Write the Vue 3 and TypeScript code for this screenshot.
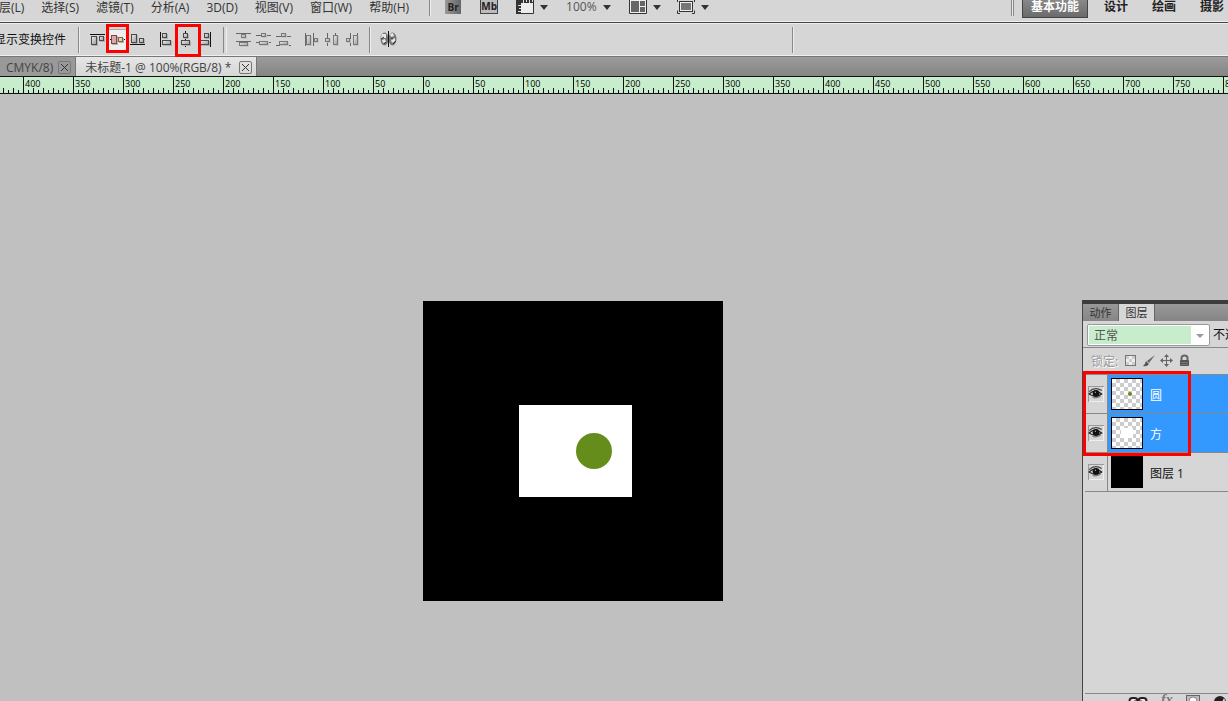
<script setup lang="ts">
import { ref } from 'vue'

const menus: string[] = ['层(L)', '选择(S)', '滤镜(T)', '分析(A)', '3D(D)', '视图(V)', '窗口(W)', '帮助(H)']
const workspaces: string[] = ['基本功能', '设计', '绘画', '摄影']
const rulerMarks: number[] = Array.from({ length: 26 }, (_, i) => Math.abs(-450 + i * 50))

interface Icon { label: string; lines: string; boxes: number[][]; dim?: boolean; pressed?: boolean }

const groups: { name: string; icons: Icon[] }[] = [
  {
    name: 'vertical',
    icons: [
      { label: '顶对齐', lines: 'M2 4.5H17', boxes: [[3, 6, 6, 9], [11, 6, 5, 5]] },
      { label: '垂直居中对齐', lines: 'M2 9.5H17', boxes: [[3, 5, 6, 9], [10, 7, 5, 5]], pressed: true },
      { label: '底对齐', lines: 'M2 14.5H17', boxes: [[3, 4, 6, 9], [11, 8, 5, 5]] },
    ],
  },
  {
    name: 'horizontal',
    icons: [
      { label: '左对齐', lines: 'M4.5 2V17', boxes: [[6, 3, 5, 5], [6, 10, 9, 5]] },
      { label: '水平居中对齐', lines: 'M9.5 1V17', boxes: [[7, 3, 5, 5], [5, 10, 9, 5]] },
      { label: '右对齐', lines: 'M14.5 2V17', boxes: [[8, 3, 5, 5], [4, 10, 9, 5]] },
    ],
  },
  {
    name: 'spread-v',
    icons: [
      { label: '按顶分布', lines: 'M2 3.5H17M2 11.5H17', boxes: [[7, 4, 5, 4], [5, 12, 9, 4]], dim: true },
      { label: '垂直居中分布', lines: 'M2 5.5H17M2 12.5H17', boxes: [[7, 3, 5, 4], [5, 11, 9, 4]], dim: true },
      { label: '按底分布', lines: 'M2 6.5H17M2 15.5H17', boxes: [[7, 3, 5, 4], [5, 11, 9, 4]], dim: true },
    ],
  },
  {
    name: 'spread-h',
    icons: [
      { label: '按左分布', lines: 'M3.5 3V16M11.5 3V16', boxes: [[4, 5, 5, 10], [12, 8, 4, 4]], dim: true },
      { label: '水平居中分布', lines: 'M5.5 3V16M13.5 3V16', boxes: [[3, 8, 5, 4], [11, 5, 5, 10]], dim: true },
      { label: '按右分布', lines: 'M8.5 3V16M15.5 3V16', boxes: [[4, 8, 4, 4], [11, 5, 5, 10]], dim: true },
    ],
  },
]

const layers = [
  { name: '圆', kind: 'circle', selected: true },
  { name: '方', kind: 'square', selected: true },
  { name: '图层 1', kind: 'solid', selected: false },
]

const blend = ref('正常')
</script>

<template>
  <div class="app">
    <header class="menubar">
      <nav class="menus">
        <button v-for="m in menus" :key="m" type="button">{{ m }}</button>
      </nav>
      <i class="rule short"></i>
      <div class="launchers">
        <button type="button" class="badge br">Br</button>
        <button type="button" class="badge mb">Mb</button>
        <button type="button" class="drop" aria-label="查看额外内容">
          <svg width="18" height="14" viewBox="0 0 18 14">
            <path d="M.5 0V13.5H17.5V0" fill="#ececec" stroke="#333" />
            <path d="M0 0H18V3H5V14H0Z" fill="#333" />
            <path d="M7.5 0V3M10.5 0V2M13.5 0V3M16.5 0V2M2 5.5H5M3 8.5H5M2 11.5H5" stroke="#ddd" />
          </svg>
          <svg class="arrow" width="8" height="5" viewBox="0 0 8 5"><path d="M0 0H8L4 5Z" /></svg>
        </button>
        <button type="button" class="drop zoom"><span>100%</span>
          <svg class="arrow" width="8" height="5" viewBox="0 0 8 5"><path d="M0 0H8L4 5Z" /></svg>
        </button>
        <button type="button" class="drop" aria-label="排列文档">
          <svg width="18" height="14" viewBox="0 0 18 14">
            <path d="M.5 0V13.5H17.5V0" fill="#eee" stroke="#333" />
            <path d="M2 1H10V12H2ZM11 1H16V6H11ZM11 7H16V12H11Z" fill="#666" />
          </svg>
          <svg class="arrow" width="8" height="5" viewBox="0 0 8 5"><path d="M0 0H8L4 5Z" /></svg>
        </button>
        <button type="button" class="drop" aria-label="屏幕模式">
          <svg width="18" height="14" viewBox="0 0 18 14">
            <rect x="2.500" y="1.500" width="13" height="10" fill="#eee" stroke="#333" />
            <rect x="4" y="3" width="10" height="7" fill="#777" />
            <path d="M.5 0V2M17.500 0V2M.5 10.500V13.500H3M17.500 10.500V13.500H15" fill="none" stroke="#333" />
          </svg>
          <svg class="arrow" width="8" height="5" viewBox="0 0 8 5"><path d="M0 0H8L4 5Z" /></svg>
        </button>
      </div>
      <div class="spaces">
        <i class="grip"></i>
        <button v-for="(w, i) in workspaces" :key="w" type="button" :class="{ on: i === 0 }">{{ w }}</button>
      </div>
    </header>

    <div class="options">
      <span class="transform">显示变换控件</span>
      <i class="rule"></i>
      <div v-for="g in groups" :key="g.name" class="group" :class="g.name">
        <button v-for="ic in g.icons" :key="ic.label" type="button" :aria-label="ic.label" :class="{ dim: ic.dim, pressed: ic.pressed }">
          <svg width="20" height="20" viewBox="0 0 20 20">
            <defs>
              <linearGradient id="metal" x1="0" y1="0" x2="1" y2="1">
                <stop offset="0" stop-color="#eee" />
                <stop offset="1" stop-color="#999" />
              </linearGradient>
            </defs>
            <path class="guide" :d="ic.lines" />
            <g v-for="(b, k) in ic.boxes" :key="k">
              <rect class="cast" :x="b[0] + 1" :y="b[1] + 1" :width="b[2]" :height="b[3]" />
              <rect class="body" :class="{ pink: ic.pressed && k === 0, gold: ic.pressed && k === 1 }" :x="b[0] + 0.5" :y="b[1] + 0.5" :width="b[2] - 1" :height="b[3] - 1" />
            </g>
          </svg>
        </button>
      </div>
      <i class="rule"></i>
      <div class="group auto">
        <button type="button" aria-label="自动对齐图层">
          <svg width="20" height="20" viewBox="0 0 20 20">
            <ellipse cx="5.500" cy="9" rx="4" ry="6.500" fill="#777" />
            <ellipse cx="13.500" cy="9" rx="4" ry="6.500" fill="#777" />
            <path d="M3 4L7 4L7 8L2 8ZM3 10L6 9L7 12L4 13ZM11 4L14 3L15 6L12 7ZM12 10L16 8L16 11L13 13Z" fill="#e8e8e8" />
            <path d="M2 9L5 7M5 14L7 12M12 8L14 9M14 14L17 11" stroke="#333" />
            <path d="M9.500 1V17" stroke="#111" />
          </svg>
        </button>
      </div>
      <i class="rule far"></i>
      <i class="mark mark-a"></i>
      <i class="mark mark-b"></i>
    </div>

    <div class="tabs">
      <div class="tab first">
        <span>CMYK/8)</span>
        <button type="button" aria-label="关闭"><svg width="11" height="11" viewBox="0 0 11 11"><path d="M2 2L9 9M9 2L2 9" /></svg></button>
      </div>
      <div class="tab current">
        <span>未标题-1 @ 100%(RGB/8) *</span>
        <button type="button" aria-label="关闭"><svg width="11" height="11" viewBox="0 0 11 11"><path d="M2 2L9 9M9 2L2 9" /></svg></button>
      </div>
    </div>

    <div class="ruler">
      <div class="scale">
        <span v-for="(n, i) in rulerMarks" :key="i">{{ n }}</span>
      </div>
    </div>

    <main class="stage">
      <svg class="document" width="300" height="300" viewBox="0 0 300 300">
        <rect width="300" height="300" fill="#000" />
        <rect x="96" y="104" width="113" height="92" fill="#fff" />
        <circle cx="171" cy="150" r="18" fill="#658d1b" />
      </svg>

      <aside class="panel">
        <div class="panel-tabs">
          <button type="button">动作</button>
          <button type="button" class="on">图层</button>
        </div>
        <div class="blend">
          <div class="select">
            <select v-model="blend" aria-label="混合模式"><option>正常</option></select>
            <svg width="8" height="5" viewBox="0 0 8 5"><path d="M0 0H8L4 4Z" fill="#999" /></svg>
          </div>
          <span class="opacity">不透</span>
        </div>
        <div class="locks">
          <span>锁定:</span>
          <button type="button" aria-label="锁定透明像素">
            <svg width="14" height="14" viewBox="0 0 14 14">
              <rect x="1.500" y="1.500" width="10" height="10" fill="#eee" stroke="#777" />
              <path d="M2 2H5V5H2ZM8 2H11V5H8ZM5 5H8V8H5ZM2 8H5V11H2ZM8 8H11V11H8Z" fill="#ccc" />
            </svg>
          </button>
          <button type="button" aria-label="锁定图像像素">
            <svg width="14" height="14" viewBox="0 0 14 14">
              <path d="M13 1L7 9L5 7Z" fill="#666" />
              <path d="M4 7L7 10Q5 13 1 12Q3 11 4 7Z" fill="#555" />
            </svg>
          </button>
          <button type="button" aria-label="锁定位置">
            <svg width="14" height="14" viewBox="0 0 14 14">
              <path d="M6.500 2V11M2 6.500H11" stroke="#666" />
              <path d="M6.500 0L9 3H4ZM6.500 13L9 10H4ZM0 6.500L3 4V9ZM13 6.500L10 4V9Z" fill="#666" />
            </svg>
          </button>
          <button type="button" aria-label="锁定全部">
            <svg width="14" height="14" viewBox="0 0 14 14">
              <path d="M3.500 7V4Q3.500 1.500 6.500 1.500T9.500 4V7" fill="none" stroke="#666" stroke-width="2" />
              <rect x="2" y="6" width="9" height="6" rx="1" fill="#555" />
              <path d="M3 8.500H10M3 10.500H10" stroke="#777" />
            </svg>
          </button>
        </div>
        <ul class="layers">
          <li v-for="l in layers" :key="l.name" :class="{ selected: l.selected }">
            <button type="button" class="eye" aria-label="指示图层可见性">
              <svg width="14" height="14" viewBox="0 0 14 14">
                <path d="M1 7Q6 2 12 7Q7 11 1 7Z" fill="#eee" stroke="#222" />
                <path d="M1 5Q6 0 12 4" fill="none" stroke="#444" />
                <circle cx="7" cy="6.500" r="3" fill="#111" />
                <path d="M6 5.500H7" stroke="#ccc" />
                <path d="M4 10Q7 11 11 9" fill="none" stroke="#777" />
              </svg>
            </button>
            <span class="thumb" :class="l.kind"><i></i></span>
            <span class="name">{{ l.name }}</span>
          </li>
        </ul>
        <i class="mark mark-c"></i>
        <footer class="panel-foot">
          <svg width="20" height="8" viewBox="0 0 20 8">
            <rect x="1.500" y="4" width="8" height="6" rx="3" fill="#eee" stroke="#222" stroke-width="2" />
            <rect x="10.500" y="4" width="8" height="6" rx="3" fill="#eee" stroke="#222" stroke-width="2" />
            <path d="M6 7H14" stroke="#222" />
          </svg>
          <em>fx</em>
          <svg width="14" height="8" viewBox="0 0 14 8">
            <rect x=".5" y="1.500" width="13" height="9" fill="#bbb" stroke="#666" />
            <circle cx="7" cy="7" r="4" fill="#fff" stroke="#888" />
          </svg>
          <svg width="14" height="8" viewBox="0 0 14 8">
            <circle cx="7" cy="8" r="6" fill="#222" />
            <path d="M11 4A6 6 0 0 1 7 13Z" fill="#eee" />
          </svg>
        </footer>
      </aside>
    </main>
  </div>
</template>

<style>
html, body { margin: 0; overflow: hidden; }
</style>

<style scoped>
.app {
  height: 100vh;
  display: flex;
  flex-direction: column;
  overflow: hidden;
  color: #222;
  background: #d6d6d6;
  font: 12px/14px "Open Sans", "Noto Sans CJK SC", sans-serif;
  white-space: nowrap;
}
* { box-sizing: border-box; }
button { padding: 0; border: 0; background: none; color: inherit; font: inherit; }
svg { display: block; }
i { display: block; flex: none; }

.menubar {
  display: flex;
  align-items: flex-start;
  height: 23px;
  flex: none;
  border-bottom: 1px solid #444;
  box-shadow: inset 0 -1px #f0f0f0;
}
.menus { display: flex; gap: 17px; margin-left: -1px; color: #333; }
.menus button { line-height: 16px; }
.rule { width: 2px; height: 26px; border-left: 1px solid #888; border-right: 1px solid #eee; }
.rule.short { height: 16px; margin-left: 20px; }
.launchers { display: flex; align-items: flex-start; margin-left: 14px; }
.badge { height: 14px; font-size: 10px; line-height: 13px; font-weight: 700; color: #222; }
.br { width: 16px; background: linear-gradient(90deg, #999, #666); }
.mb { width: 18px; margin-left: 19px; border: 1px solid #444; border-top: 0; background: #bbb; }
.drop { display: flex; align-items: center; gap: 6px; height: 14px; margin-left: 16px; }
.mb + .drop, .drop.zoom { margin-left: 18px; }
.drop .arrow { fill: #333; }
.drop.zoom { color: #555; }
.drop.zoom + .drop { margin-left: 18px; }
.spaces { display: flex; margin-left: auto; padding-right: 4px; gap: 24px; font-weight: 700; }
.spaces button { height: 18px; padding-bottom: 4px; line-height: 14px; }
.spaces .on {
  padding: 0 8px 3px;
  margin: 0 -8px 0 -16px;
  border: 1px solid #444;
  border-top: 0;
  background: linear-gradient(#888, #6b6b6b);
  color: #fff;
}
.grip { width: 3px; height: 16px; border: solid #888; border-width: 0 1px; background: #eee; }

.options {
  position: relative;
  display: flex;
  align-items: center;
  height: 34px;
  flex: none;
  border-bottom: 1px solid #777;
  box-shadow: inset 0 1px #eee, inset 0 -1px #eee;
}
.transform { margin: 0 12px 0 -6px; color: #111; }
.group { display: flex; }
.group button { width: 20px; height: 20px; }
.vertical { margin-left: 8px; }
.horizontal { margin-left: 8px; }
.spread-v { margin-left: 18px; position: relative; }
.spread-v::before { content: ""; position: absolute; left: -11px; top: -3px; width: 2px; height: 26px; border-left: 1px solid #888; border-right: 1px solid #eee; }
.spread-h { margin: 0 7px 0 8px; }
.auto { margin-left: 8px; }
.rule.far { margin-left: 393px; }
.guide { fill: none; stroke: #111; }
.cast { fill: #b0b0b0; }
.body { fill: url(#metal); stroke: #4a4a4a; }
.dim .guide { stroke: #666; }
.dim .cast { fill: #c4c4c4; }
.dim .body { stroke: #777; }
.pressed { background: #efefef; box-shadow: 0 0 0 1px #aaa; }
.body.pink { fill: #d9a8a8; stroke: #844; }
.body.gold { fill: #e8d69c; stroke: #765; }
.mark { position: absolute; border: 3px solid #f00; pointer-events: none; }
.mark-a { left: 106px; top: 1px; width: 23px; height: 29px; }
.mark-b { left: 175px; top: 1px; width: 26px; height: 33px; }

.tabs { display: flex; height: 19px; flex: none; background: linear-gradient(#9b9b9b, #858585); }
.tab { display: flex; align-items: center; gap: 5px; padding: 2px 4px 0 9px; color: #444; border-right: 1px solid #777; }
.tab.first { padding-left: 6px; background: #999; }
.tab.current { gap: 8px; background: linear-gradient(#e6e6e6, #d6d6d6); }
.tab button { border: 1px solid #777; border-radius: 2px; }
.tab svg { stroke: #333; }

.ruler { height: 18px; flex: none; overflow: hidden; background: #c7edcc; border: solid #111; border-width: 1px 0; }
.scale { display: flex; margin-left: -27px; height: 16px; }
.scale span {
  flex: none;
  width: 50px;
  padding-left: 2px;
  font-size: 9px;
  line-height: 14px;
  color: #000;
  background:
    linear-gradient(#111, #111) left top / 1px 100% no-repeat,
    repeating-linear-gradient(90deg, #111 0 1px, transparent 1px 10px) left bottom / 100% 5px no-repeat,
    repeating-linear-gradient(90deg, #111 0 1px, transparent 1px 5px) left bottom / 100% 3px no-repeat;
}

.stage { position: relative; flex: 1; min-height: 0; background: #c0c0c0; overflow: hidden; }
.document { position: absolute; left: 423px; top: 207px; }

.panel {
  position: absolute;
  right: 0;
  top: 206px;
  bottom: 0;
  width: 146px;
  display: flex;
  flex-direction: column;
  border-left: 1px solid #444;
  border-top: 4px solid #3c3c3c;
  background: #d6d6d6;
}
.panel-tabs { display: flex; height: 17px; flex: none; background: linear-gradient(#999, #858585); }
.panel-tabs button { padding: 0 6px; width: 36px; font-size: 11px; color: #333; border-right: 1px solid #666; }
.panel-tabs .on { background: #d6d6d6; }
.blend { display: flex; align-items: center; gap: 3px; height: 27px; flex: none; padding: 1px 0 0 4px; border-bottom: 1px solid #888; overflow: hidden; }
.select { position: relative; flex: none; width: 123px; height: 22px; border: 1px solid #999; border-radius: 2px; padding: 1px; background: #fff; }
.select select { appearance: none; width: 102px; height: 18px; border: 0; padding: 2px 5px 0; background: #c7edcc; color: #555; font: inherit; line-height: 16px; }
.select svg { position: absolute; right: 5px; top: 9px; }
.opacity { color: #111; flex: none; }
.locks { display: flex; align-items: center; gap: 4px; height: 26px; flex: none; padding-left: 8px; color: #999; text-shadow: 1px 1px #fff; }
.locks span { width: 29px; padding-top: 2px; }
.layers { list-style: none; margin: 0 0 0 2px; padding: 0; border-top: 1px solid #888; }
.layers li { display: flex; align-items: center; height: 39px; border-bottom: 1px solid #888; color: #111; }
.layers li.selected { color: #fff; background: linear-gradient(90deg, #d6d6d6 23px, #39f 23px); }
.name { padding-top: 3px; }
.eye { width: 23px; height: 38px; border-right: 1px solid #888; display: grid; place-items: center; }
.eye svg { width: 16px; height: 16px; box-shadow: inset 1px 1px #999, inset -1px -1px #eee; }
.thumb { width: 32px; height: 32px; margin: 0 7px 0 3px; border: 1px solid #000; display: grid; place-items: center; background: repeating-conic-gradient(#ccc 0 25%, #fff 0 50%) 0 0 / 8px 8px; }
.circle i { width: 4px; height: 4px; border-radius: 2px; background: #658d1b; margin-left: 5px; }
.square i { width: 12px; height: 10px; background: #fff; }
.thumb.solid { background: #000; }
.mark-c { left: 0; top: 67px; width: 108px; height: 85px; }
.panel-foot { display: flex; align-items: flex-start; gap: 13px; height: 8px; flex: none; overflow: hidden; margin: auto 0 0 2px; padding: 0 0 0 43px; border-top: 1px solid #888; }
.panel-foot em { font: italic 700 14px/12px "Liberation Serif", serif; color: #777; width: 12px; }
.panel-foot svg { flex: none; }
</style>
